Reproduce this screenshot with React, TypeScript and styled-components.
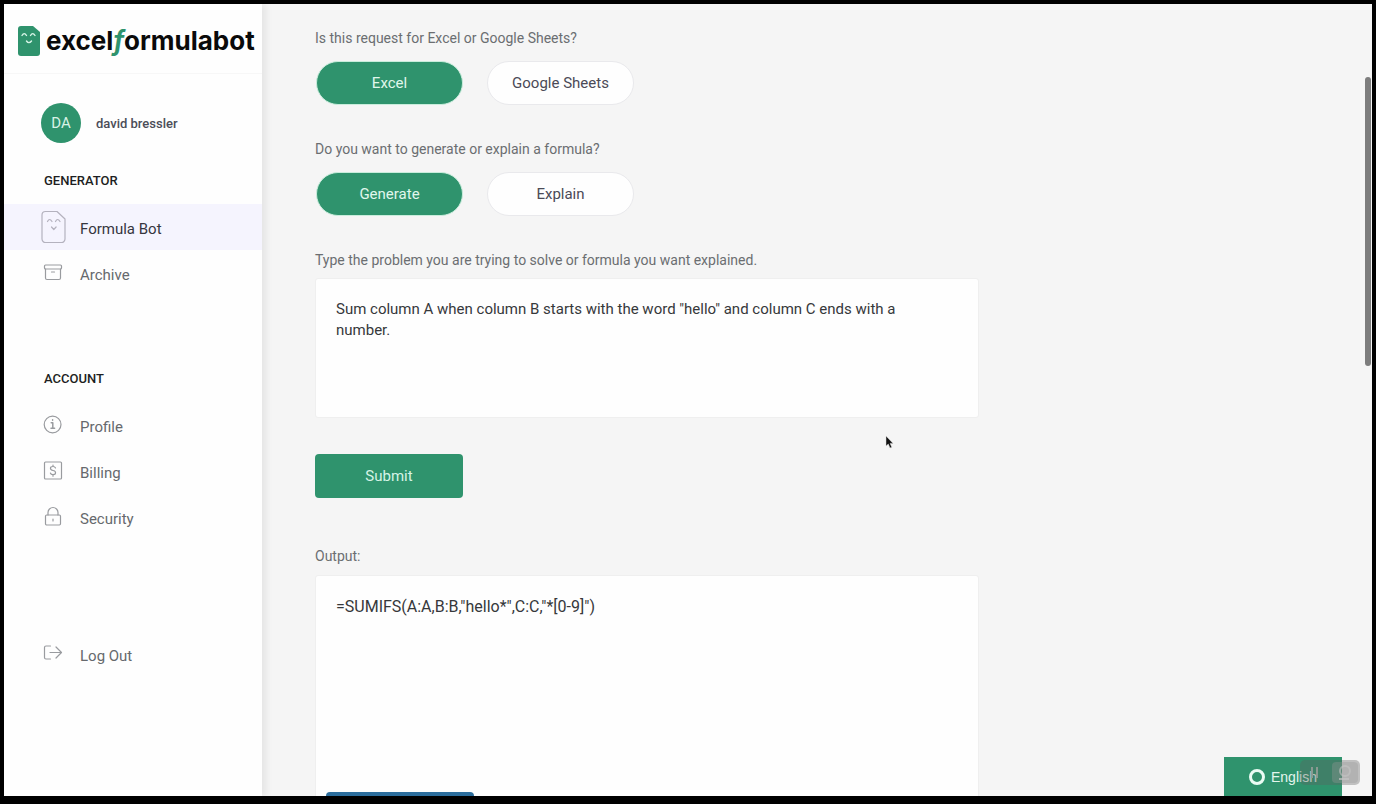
import React, { useState } from "react";
import styled, { createGlobalStyle } from "styled-components";

const GlobalStyle = createGlobalStyle`
  *, *::before, *::after { box-sizing: border-box; }
  body {
    margin: 0;
    background: #000;
    font-family: Roboto, "Liberation Sans", sans-serif;
    color: #3d4145;
  }
  button, textarea { font: inherit; }
`;

const green = "#2f936d";

const Frame = styled.div`
  height: 100vh;
  padding: 4px 4px 8px;
  background: #000;
`;

const Screen = styled.div`
  position: relative;
  display: flex;
  height: 100%;
  overflow: hidden;
  background: #f5f5f5;
`;

const Sidebar = styled.aside`
  flex: 0 0 258px;
  min-width: 0;
  background: #fefefe;
  box-shadow: 5px 0 6px rgba(0, 0, 0, 0.06);
`;

const Brand = styled.a`
  display: flex;
  align-items: center;
  gap: 6px;
  height: 70px;
  padding: 4px 0 0 14px;
  border-bottom: 1px solid #f7f7f7;
  color: #0a0a0a;
  font-family: Inter, "Open Sans", sans-serif;
  font-size: 26px;
  font-weight: 700;
  line-height: 32px;
  text-decoration: none;
  white-space: nowrap;

  em { color: ${green}; }
`;

const User = styled.div`
  display: flex;
  align-items: center;
  gap: 15px;
  padding: 29px 0 0 37px;
  font-size: 13px;
  font-weight: 500;
  color: #4b4d58;
`;

const Avatar = styled.span`
  display: grid;
  place-items: center;
  width: 40px;
  height: 40px;
  border-radius: 50%;
  background: ${green};
  color: #d9f2e6;
  font-size: 15px;
  font-weight: 400;
`;

const NavGroup = styled.nav<{ $top: number }>`
  padding-top: ${(p) => p.$top}px;
`;

const NavTitle = styled.h2`
  margin: 0 0 14px;
  padding-left: 40px;
  color: #1d1e22;
  font-size: 13px;
  font-weight: 500;
  line-height: 18px;
`;

const NavLink = styled.a<{ $active?: boolean }>`
  display: flex;
  align-items: center;
  gap: 12px;
  height: 46px;
  padding-left: 36px;
  background: ${(p) => (p.$active ? "#f5f4fe" : "transparent")};
  color: ${(p) => (p.$active ? "#36363f" : "#66696d")};
  font-size: 15px;
  text-decoration: none;
`;

const NavLabel = styled.span`
  padding-top: 3px;
`;

const NavIcon = styled.svg`
  flex: none;
  width: 28px;
  height: 36px;
  fill: none;
  stroke: #999b9f;
  stroke-width: 1.2;
  stroke-linecap: round;
  stroke-linejoin: round;
`;

const Main = styled.main`
  flex: 1;
  min-width: 0;
  padding: 24px 53px 0;
`;

const Column = styled.div`
  max-width: 664px;
`;

const Question = styled.fieldset`
  margin: 0 0 34px;
  padding: 0;
  border: 0;
`;

const labelText = `
  display: block;
  padding: 0;
  font-size: 14px;
  line-height: 20px;
  color: #6b6e71;
`;

const Legend = styled.legend`${labelText}`;
const FieldLabel = styled.label`${labelText}`;

const Choices = styled.div`
  display: flex;
  gap: 24px;
  padding: 13px 1px 0;
`;

const Pill = styled.button<{ $on: boolean }>`
  width: 147px;
  height: 44px;
  border: 1px solid ${(p) => (p.$on ? "#c9eddc" : "#e9e9ec")};
  border-radius: 22px;
  background: ${(p) => (p.$on ? green : "#fefefe")};
  color: ${(p) => (p.$on ? "#e0f7ec" : "#4b4a57")};
  font-size: 15px;
`;

const Problem = styled.textarea`
  display: block;
  width: 100%;
  height: 140px;
  margin-top: 8px;
  padding: 20px 40px 20px 20px;
  border: 1px solid #efefef;
  border-radius: 3px;
  outline: 0;
  resize: none;
  background: #fefefe;
  color: #36383b;
  font-size: 15px;
  line-height: 21px;
`;

const Submit = styled.button`
  display: block;
  width: 148px;
  height: 44px;
  margin: 36px 0 48px;
  border: 0;
  border-radius: 4px;
  background: ${green};
  color: #d6f3e6;
  font-size: 15px;
`;

const OutputCard = styled.div`
  margin-top: 9px;
  padding: 20px 10px;
  border: 1px solid #efefef;
  border-radius: 3px;
  background: #fefefe;
`;

const OutputText = styled.textarea`
  display: block;
  width: 100%;
  height: 196px;
  padding: 0 10px;
  border: 0;
  outline: 0;
  resize: none;
  background: transparent;
  color: #36383b;
  font-size: 16px;
  line-height: 21px;
`;

const CopyButton = styled.button`
  display: block;
  width: 148px;
  height: 44px;
  border: 0;
  border-radius: 4px;
  background: #2b6d9c;
  color: #fff;
`;

const ScrollThumb = styled.div`
  position: absolute;
  top: 73px;
  right: 1px;
  width: 6px;
  height: 289px;
  border-radius: 3px;
  background: #7d7d7d;
`;

const Language = styled.button`
  position: absolute;
  right: 30px;
  bottom: 0;
  display: flex;
  align-items: center;
  gap: 6px;
  width: 118px;
  height: 39px;
  padding: 0 0 0 25px;
  border: 0;
  background: ${green};
  color: #e3f6ed;
  font-family: "Liberation Sans", sans-serif;
  font-size: 14px;
`;

const Ring = styled.span`
  width: 16px;
  height: 16px;
  border: 3px solid #e9fbf3;
  border-radius: 50%;
`;

const Recorder = styled.div`
  position: absolute;
  right: 12px;
  bottom: 11px;
  width: 60px;
  height: 25px;
  border-radius: 5px;
  background: rgba(95, 95, 95, 0.35);

  svg { display: block; }
`;

const Pointer = styled.svg`
  position: absolute;
  left: 881px;
  top: 431px;
`;

function BotMark() {
  return (
    <svg width="22" height="30" viewBox="0 0 22 30" fill="none" aria-hidden="true">
      <path d="M3 0h12l7 6v21a3 3 0 0 1-3 3H3a3 3 0 0 1-3-3V3a3 3 0 0 1 3-3z" fill={green} />
      <path
        d="M4 9.500q2.200-3.800 4.500 0M12.500 9.500q2.200-3.800 4.500 0M8.500 15q2.300 3.200 5 0"
        stroke="#d7f5e7"
        strokeWidth="1.400"
        strokeLinecap="round"
      />
    </svg>
  );
}

const icons: Record<string, React.ReactNode> = {
  bot: (
    <path
      d="M17 2.500H5.500A3.500 3.500 0 0 0 2 6v24a3.500 3.500 0 0 0 3.500 3.500h16A3.500 3.500 0 0 0 25 30V10zM7.500 12.500q2-4 4.500 0M15.500 12.500q2-4 4.500 0M11.500 18l2.300 2.500 2.300-2.500"
      stroke="#b4b2be"
    />
  ),
  archive: (
    <>
      <rect x="4.500" y="10" width="17" height="4" rx="1" />
      <path d="M5.500 14v9a1.500 1.500 0 0 0 1.500 1.500h12a1.500 1.500 0 0 0 1.500-1.500v-9M11.500 17h3" />
    </>
  ),
  info: (
    <>
      <circle cx="12.600" cy="17.500" r="8.400" />
      <path d="M11.200 15.800h1.600v5.500M11 21.300h3.600M12.600 12.800v.5" strokeWidth="1.500" />
    </>
  ),
  billing: (
    <>
      <rect x="4.500" y="9" width="17" height="17" rx="1" />
      <path d="M15.500 15c-.5-1.200-1.500-1.500-2.500-1.500-3.400 0-3.400 3.500 0 4s3.400 4.200 0 4.200c-1.200 0-2.300-.5-2.600-1.700M13 12v1.500M13 21.700v1.500" />
    </>
  ),
  lock: (
    <>
      <rect x="5.500" y="16" width="15" height="10" rx="1.200" />
      <path d="M8 16v-2.500a5 5 0 0 1 10 0v2.500M13 20v2" />
    </>
  ),
  logout: (
    <path d="M10.500 10H6a1.500 1.500 0 0 0-1.500 1.500v10a1.500 1.500 0 0 0 1.500 1.500h4.500M10 16.500h11.500M16 11l5.500 5.500-5.500 5.500" />
  ),
};

function NavItem({ icon, label, active }: { icon: string; label: string; active?: boolean }) {
  return (
    <NavLink href="#" $active={active} aria-current={active ? "page" : undefined}>
      <NavIcon viewBox="0 0 28 36" aria-hidden="true">{icons[icon]}</NavIcon>
      <NavLabel>{label}</NavLabel>
    </NavLink>
  );
}

function ChoiceQuestion({ legend, options }: { legend: string; options: string[] }) {
  const [selected, setSelected] = useState(options[0]);
  return (
    <Question>
      <Legend>{legend}</Legend>
      <Choices>
        {options.map((option) => (
          <Pill
            key={option}
            type="button"
            $on={option === selected}
            aria-pressed={option === selected}
            onClick={() => setSelected(option)}
          >
            {option}
          </Pill>
        ))}
      </Choices>
    </Question>
  );
}

export default function App() {
  return (
    <Frame>
      <GlobalStyle />
      <Screen>
        <Sidebar>
          <Brand href="#">
            <BotMark />
            <span>excel<em>f</em>ormulabot</span>
          </Brand>
          <User>
            <Avatar>DA</Avatar>
            david bressler
          </User>
          <NavGroup $top={29} aria-label="Generator">
            <NavTitle>GENERATOR</NavTitle>
            <NavItem icon="bot" label="Formula Bot" active />
            <NavItem icon="archive" label="Archive" />
          </NavGroup>
          <NavGroup $top={74} aria-label="Account">
            <NavTitle>ACCOUNT</NavTitle>
            <NavItem icon="info" label="Profile" />
            <NavItem icon="billing" label="Billing" />
            <NavItem icon="lock" label="Security" />
          </NavGroup>
          <NavGroup $top={91} aria-label="Session">
            <NavItem icon="logout" label="Log Out" />
          </NavGroup>
        </Sidebar>
        <Main>
          <Column>
            <ChoiceQuestion
              legend="Is this request for Excel or Google Sheets?"
              options={["Excel", "Google Sheets"]}
            />
            <ChoiceQuestion
              legend="Do you want to generate or explain a formula?"
              options={["Generate", "Explain"]}
            />
            <FieldLabel htmlFor="problem">
              Type the problem you are trying to solve or formula you want explained.
            </FieldLabel>
            <Problem
              id="problem"
              spellCheck={false}
              defaultValue={'Sum column A when column B starts with the word "hello" and column C ends with a number.'}
            />
            <Submit type="button">Submit</Submit>
            <FieldLabel htmlFor="output">Output:</FieldLabel>
            <OutputCard>
              <OutputText
                id="output"
                readOnly
                spellCheck={false}
                value={'=SUMIFS(A:A,B:B,"hello*",C:C,"*[0-9]")'}
              />
              <CopyButton type="button" aria-label="Copy" />
            </OutputCard>
          </Column>
        </Main>
        <ScrollThumb />
        <Language type="button">
          <Ring />
          English
        </Language>
        <Recorder>
          <svg width="60" height="25" viewBox="0 0 60 25" aria-hidden="true">
            <path d="M12 7v11M17 7v11" stroke="#8a9a92" strokeWidth="2" />
            <rect x="32" y="2" width="26" height="21" rx="4" fill="#999" fillOpacity=".35" />
            <circle cx="45" cy="11" r="5" fill="none" stroke="#c4c4c4" strokeOpacity=".6" strokeWidth="2" />
            <path d="M39 19h10" stroke="#c4c4c4" strokeOpacity=".7" strokeWidth="2" />
          </svg>
        </Recorder>
        <Pointer width="10" height="15" viewBox="0 0 10 15" aria-hidden="true">
          <path d="M1 1v10l2.300-2 1.700 4 1.800-.8-1.700-3.800h3z" fill="#111" stroke="#ddd" strokeWidth=".5" />
        </Pointer>
      </Screen>
    </Frame>
  );
}
